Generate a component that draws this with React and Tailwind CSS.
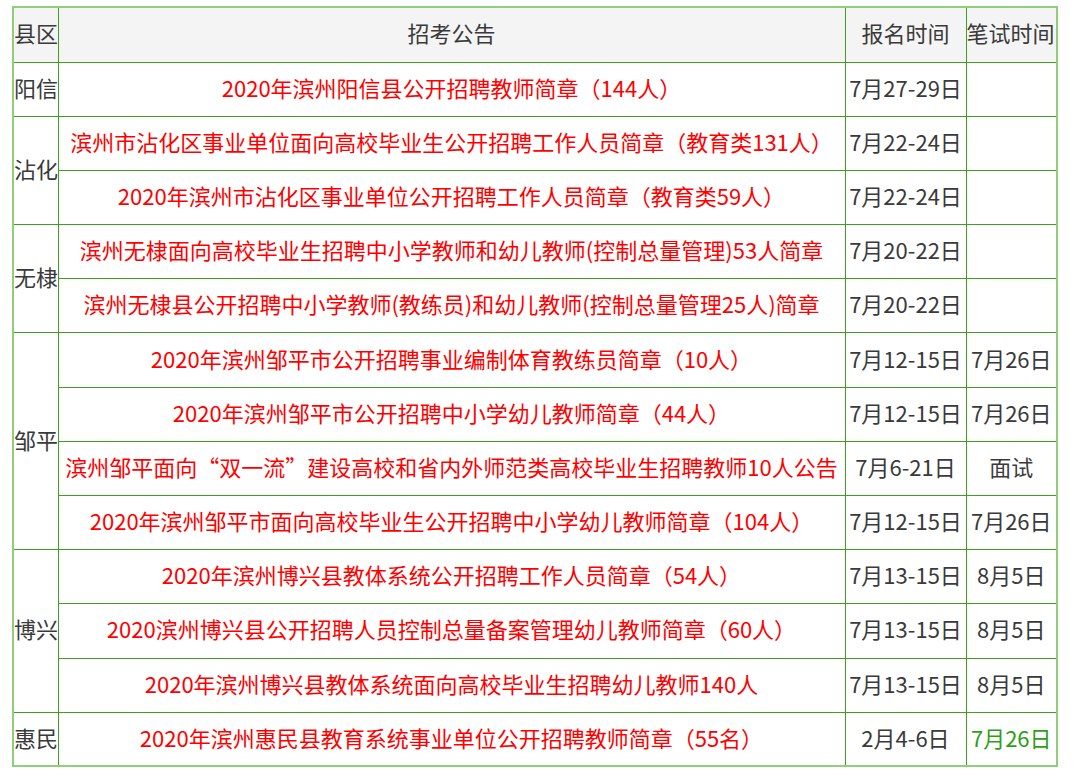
import React from "react";

const rows = [
  { area: "阳信", span: 1, title: "2020年滨州阳信县公开招聘教师简章（144人）", reg: "7月27-29日", exam: "" },
  { area: "沾化", span: 2, title: "滨州市沾化区事业单位面向高校毕业生公开招聘工作人员简章（教育类131人）", reg: "7月22-24日", exam: "" },
  { title: "2020年滨州市沾化区事业单位公开招聘工作人员简章（教育类59人）", reg: "7月22-24日", exam: "" },
  { area: "无棣", span: 2, title: "滨州无棣面向高校毕业生招聘中小学教师和幼儿教师(控制总量管理)53人简章", reg: "7月20-22日", exam: "" },
  { title: "滨州无棣县公开招聘中小学教师(教练员)和幼儿教师(控制总量管理25人)简章", reg: "7月20-22日", exam: "" },
  { area: "邹平", span: 4, title: "2020年滨州邹平市公开招聘事业编制体育教练员简章（10人）", reg: "7月12-15日", exam: "7月26日" },
  { title: "2020年滨州邹平市公开招聘中小学幼儿教师简章（44人）", reg: "7月12-15日", exam: "7月26日" },
  { title: "滨州邹平面向“双一流”建设高校和省内外师范类高校毕业生招聘教师10人公告", reg: "7月6-21日", exam: "面试" },
  { title: "2020年滨州邹平市面向高校毕业生公开招聘中小学幼儿教师简章（104人）", reg: "7月12-15日", exam: "7月26日" },
  { area: "博兴", span: 3, title: "2020年滨州博兴县教体系统公开招聘工作人员简章（54人）", reg: "7月13-15日", exam: "8月5日" },
  { title: "2020滨州博兴县公开招聘人员控制总量备案管理幼儿教师简章（60人）", reg: "7月13-15日", exam: "8月5日" },
  { title: "2020年滨州博兴县教体系统面向高校毕业生招聘幼儿教师140人", reg: "7月13-15日", exam: "8月5日" },
  { area: "惠民", span: 1, title: "2020年滨州惠民县教育系统事业单位公开招聘教师简章（55名）", reg: "2月4-6日", exam: "7月26日", green: true },
];

const cell = "border border-[#3fa020] px-0 pt-0 pb-[5px] whitespace-nowrap";

export default function App() {
  return (
    <div className="w-[1080px] h-[781px] bg-white pt-[6px] pl-[12px]">
      <table
        className="border-collapse table-fixed w-[1044px] border-2 border-[#8fcf7a] text-[22px] leading-none text-[#3a3a3a]"
        style={{ fontFamily: '"Noto Sans CJK SC", "Noto Sans", sans-serif' }}
      >
        <colgroup>
          <col className="w-[45px]" />
          <col className="w-[787px]" />
          <col className="w-[121px]" />
          <col className="w-[91px]" />
        </colgroup>
        <thead>
          <tr className="h-[55px] bg-[#f4f4f4]">
            <th className={`${cell} font-normal text-left`}>县区</th>
            <th className={`${cell} font-normal text-center`}>招考公告</th>
            <th className={`${cell} font-normal text-center`}>报名时间</th>
            <th className={`${cell} font-normal text-left`}>笔试时间</th>
          </tr>
        </thead>
        <tbody>
          {rows.map((r, i) => (
            <tr key={i} className="h-[54.2px]">
              {r.area && (
                <td rowSpan={r.span} className={`${cell} text-left border-l-2 border-l-[#8fcf7a]`}>
                  {r.area}
                </td>
              )}
              <td className={`${cell} text-center text-[#ff0000]`}>{r.title}</td>
              <td className={`${cell} text-center`}>{r.reg}</td>
              <td className={`${cell} text-center ${r.green ? "text-[#2e9e1a]" : ""}`}>{r.exam}</td>
            </tr>
          ))}
        </tbody>
      </table>
    </div>
  );
}
